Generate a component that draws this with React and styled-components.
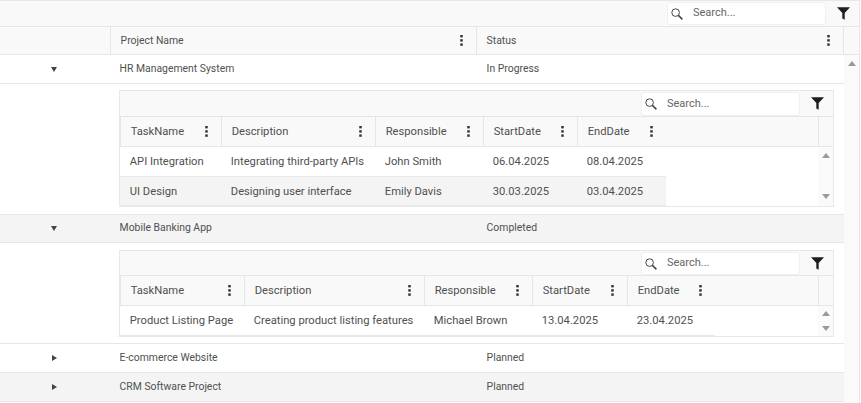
import React from "react";
import styled, { createGlobalStyle } from "styled-components";

const projects = [
  {
    name: "HR Management System",
    status: "In Progress",
    open: true,
    tasks: {
      columns: [101, 154, 108, 94, 89],
      toolbar: 26,
      searchBox: 24,
      top: 6,
      bottom: 7,
      rows: [
        ["API Integration", "Integrating third-party APIs", "John Smith", "06.04.2025", "08.04.2025"],
        ["UI Design", "Designing user interface", "Emily Davis", "30.03.2025", "03.04.2025"],
      ],
    },
  },
  {
    name: "Mobile Banking App",
    status: "Completed",
    open: true,
    alt: true,
    height: 28,
    tasks: {
      columns: [124, 180, 108, 95, 88],
      toolbar: 25,
      searchBox: 23,
      top: 7,
      bottom: 6,
      rows: [["Product Listing Page", "Creating product listing features", "Michael Brown", "13.04.2025", "23.04.2025"]],
    },
  },
  { name: "E-commerce Website", status: "Planned" },
  { name: "CRM Software Project", status: "Planned", alt: true },
];

const taskHeaders = ["TaskName", "Description", "Responsible", "StartDate", "EndDate"];

const SearchIcon = () => (
  <svg width="12" height="12" viewBox="0 0 12 12" fill="none" stroke="#444" strokeWidth="1">
    <circle cx="4.6" cy="4.6" r="3.8" />
    <path d="M7.4 7.4 L11.4 11.4" strokeWidth="1.5" />
  </svg>
);

const FilterIcon = () => (
  <svg width="13" height="13" viewBox="0 0 13 13" fill="#1f1f1f">
    <path d="M0 0.3 H13 L7.7 6 V12.8 L5.3 11.4 V6 Z" />
  </svg>
);

const MenuIcon = () => (
  <svg width="3" height="11" viewBox="0 0 3 11" fill="#333">
    <rect x="0.25" y="0" width="2.5" height="2.4" />
    <rect x="0.25" y="4.2" width="2.5" height="2.4" />
    <rect x="0.25" y="8.4" width="2.5" height="2.4" />
  </svg>
);

function Search({ height, box }) {
  return (
    <Toolbar $height={height}>
      <SearchBox $height={box}>
        <SearchIcon />
        <SearchText>Search...</SearchText>
      </SearchBox>
      <FilterSlot>
        <FilterIcon />
      </FilterSlot>
    </Toolbar>
  );
}

function TaskGrid({ tasks }) {
  const template = tasks.columns.map((w) => w + "px").join(" ");
  const bodyWidth = tasks.columns.reduce((a, b) => a + b, 0);
  return (
    <Nested>
      <Search height={tasks.toolbar} box={tasks.searchBox} />
      <TaskHeader>
        <TaskHeaderCols style={{ gridTemplateColumns: template + " 1fr" }}>
          {taskHeaders.map((h) => (
            <TaskHeaderCell key={h}>
              <span>{h}</span>
              <MenuIcon />
            </TaskHeaderCell>
          ))}
          <span />
        </TaskHeaderCols>
        <HeaderGutter $width={14} />
      </TaskHeader>
      <TaskBody>
        <TaskRows>
          {tasks.rows.map((row, i) => (
            <TaskRow key={row[0]} $alt={i % 2 === 1} style={{ gridTemplateColumns: template, width: bodyWidth }}>
              {row.map((c) => (
                <TaskCell key={c}>{c}</TaskCell>
              ))}
            </TaskRow>
          ))}
        </TaskRows>
        <ScrollBar $pad={tasks.rows.length === 1 ? "5px 0" : "6px 0 7px"}>
          <ArrowUp />
          <ArrowDown />
        </ScrollBar>
      </TaskBody>
    </Nested>
  );
}

export default function App() {
  return (
    <Page>
      <GlobalStyle />
      <Search height={26} box={23} />
      <MainHeader>
        <MainHeaderCols>
          <MainHeaderCell />
          <MainHeaderCell>
            <span>Project Name</span>
            <MenuIcon />
          </MainHeaderCell>
          <MainHeaderCell>
            <span>Status</span>
            <MenuIcon />
          </MainHeaderCell>
        </MainHeaderCols>
        <HeaderGutter $width={15} />
      </MainHeader>
      <MainBody>
        <Rows>
          {projects.map((p) => (
            <React.Fragment key={p.name}>
              <ProjectRow $alt={p.alt} $height={p.height}>
                <Expander $open={p.open} />
                <ProjectCell>{p.name}</ProjectCell>
                <ProjectCell>{p.status}</ProjectCell>
              </ProjectRow>
              {p.tasks && (
                <Detail $top={p.tasks.top} $bottom={p.tasks.bottom}>
                  <TaskGrid tasks={p.tasks} />
                </Detail>
              )}
            </React.Fragment>
          ))}
        </Rows>
        <ScrollBar $pad="6px 0 0">
          <ArrowUp />
        </ScrollBar>
      </MainBody>
    </Page>
  );
}

const GlobalStyle = createGlobalStyle`
html, body { margin: 0; padding: 0; background: #fff; }
* { box-sizing: border-box; }
`;

const Page = styled.div`
width: 860px;
height: 403px;
overflow: hidden;
display: flex;
flex-direction: column;
font-family: Roboto, "Liberation Sans", sans-serif;
color: #505050;
border-top: 1px solid #e8e8e8;
border-right: 1px solid #e8e8e8;
`;

const Toolbar = styled.div`
height: ${(p) => p.$height}px;
flex: none;
display: flex;
justify-content: flex-end;
align-items: flex-start;
background: #f9f9f9;
border-bottom: 1px solid #e6e6e6;
padding-top: 1px;
`;

const SearchBox = styled.div`
width: 159px;
height: ${(p) => p.$height}px;
display: flex;
align-items: center;
gap: 10px;
padding-left: 3px;
background: #fff;
border: 1px solid #f0f0f0;
border-radius: 3px;
`;

const SearchText = styled.span`
font-size: 11px;
color: #666;
margin-top: -2px;
`;

const FilterSlot = styled.div`
width: 33px;
height: 23px;
display: flex;
align-items: center;
justify-content: center;
padding-left: 1px;
`;

const MainHeader = styled.div`
height: 28px;
flex: none;
display: flex;
background: #f9f9f9;
border-bottom: 1px solid #e6e6e6;
`;

const MainHeaderCols = styled.div`
width: 844px;
flex: none;
display: grid;
grid-template-columns: 111px 366px 367px;
`;

const HeaderGutter = styled.div`
width: ${(p) => p.$width}px;
flex: none;
`;

const MainHeaderCell = styled.div`
display: flex;
align-items: center;
justify-content: space-between;
padding: 0 13px 0 9.6px;
font-size: 10.4px;
border-right: 1px solid #e6e6e6;
span { margin-top: -1px; }
`;

const MainBody = styled.div`
flex: 1;
display: flex;
min-height: 0;
`;

const Rows = styled.div`
width: 844px;
flex: none;
`;

const ProjectRow = styled.div`
height: ${(p) => p.$height || 29}px;
display: grid;
grid-template-columns: 111px 367px 366px;
align-items: center;
background: ${(p) => (p.$alt ? "#f4f4f4" : "#fff")};
border-bottom: 1px solid #e6e6e6;
`;

const Expander = styled.span`
justify-self: center;
margin-left: -3px;
width: 0;
height: 0;
${(p) =>
  p.$open
    ? "border-left: 3.5px solid transparent; border-right: 3.5px solid transparent; border-top: 5px solid #444;"
    : "border-top: 3.5px solid transparent; border-bottom: 3.5px solid transparent; border-left: 5px solid #444;"}
`;

const ProjectCell = styled.div`
padding: 0 0 2px 8.6px;
font-size: 10.4px;
white-space: nowrap;
`;

const Detail = styled.div`
padding: ${(p) => p.$top}px 0 ${(p) => p.$bottom}px 119px;
border-bottom: 1px solid #e6e6e6;
`;

const Nested = styled.div`
border: 1px solid #e8e8e8;
width: 715px;
`;

const TaskHeader = styled.div`
height: 30px;
display: flex;
background: #f9f9f9;
border-bottom: 1px solid #e6e6e6;
`;

const TaskHeaderCols = styled.div`
flex: 1;
display: grid;
border-left: 1px solid #e6e6e6;
border-right: 1px solid #e6e6e6;
`;

const TaskHeaderCell = styled.div`
display: flex;
align-items: center;
justify-content: space-between;
padding: 0 13px 0 9.7px;
font-size: 11.2px;
border-right: 1px solid #e6e6e6;
&:nth-child(5) { border-right-color: transparent; }
`;

const TaskBody = styled.div`
display: flex;
`;

const TaskRows = styled.div`
flex: 1;
`;

const TaskRow = styled.div`
height: 30px;
display: grid;
align-items: center;
background: ${(p) => (p.$alt ? "#f4f4f4" : "#fff")};
border-bottom: 1px solid #e8e8e8;
&:nth-child(2) { height: 29px; }
`;

const TaskCell = styled.div`
padding-left: 9.8px;
font-size: 11.2px;
white-space: nowrap;
`;

const ScrollBar = styled.div`
width: 15px;
flex: none;
display: flex;
flex-direction: column;
justify-content: space-between;
align-items: center;
padding: ${(p) => p.$pad};
background: #fafafa;
`;

const ArrowUp = styled.span`
width: 0;
height: 0;
border-left: 4.5px solid transparent;
border-right: 4.5px solid transparent;
border-bottom: 5px solid #9a9a9a;
`;

const ArrowDown = styled.span`
width: 0;
height: 0;
border-left: 4.5px solid transparent;
border-right: 4.5px solid transparent;
border-top: 5px solid #9a9a9a;
`;
